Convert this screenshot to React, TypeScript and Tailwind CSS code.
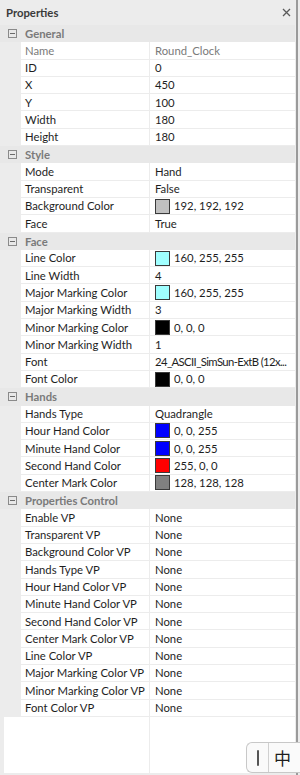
import React from "react";

type Prop = {
  name: string;
  value: string;
  swatch?: string;
  muted?: boolean;
  tight?: boolean;
};

type Category = {
  title: string;
  props: Prop[];
};

const categories: Category[] = [
  {
    title: "General",
    props: [
      { name: "Name", value: "Round_Clock", muted: true },
      { name: "ID", value: "0" },
      { name: "X", value: "450" },
      { name: "Y", value: "100" },
      { name: "Width", value: "180" },
      { name: "Height", value: "180" },
    ],
  },
  {
    title: "Style",
    props: [
      { name: "Mode", value: "Hand" },
      { name: "Transparent", value: "False" },
      { name: "Background Color", value: "192, 192, 192", swatch: "#c0c0c0" },
      { name: "Face", value: "True" },
    ],
  },
  {
    title: "Face",
    props: [
      { name: "Line Color", value: "160, 255, 255", swatch: "#a0ffff" },
      { name: "Line Width", value: "4" },
      { name: "Major Marking Color", value: "160, 255, 255", swatch: "#a0ffff" },
      { name: "Major Marking Width", value: "3" },
      { name: "Minor Marking Color", value: "0, 0, 0", swatch: "#000000" },
      { name: "Minor Marking Width", value: "1" },
      { name: "Font", value: "24_ASCII_SimSun-ExtB (12x...", tight: true },
      { name: "Font Color", value: "0, 0, 0", swatch: "#000000" },
    ],
  },
  {
    title: "Hands",
    props: [
      { name: "Hands Type", value: "Quadrangle" },
      { name: "Hour Hand Color", value: "0, 0, 255", swatch: "#0000ff" },
      { name: "Minute Hand Color", value: "0, 0, 255", swatch: "#0000ff" },
      { name: "Second Hand Color", value: "255, 0, 0", swatch: "#ff0000" },
      { name: "Center Mark Color", value: "128, 128, 128", swatch: "#808080" },
    ],
  },
  {
    title: "Properties Control",
    props: [
      "Enable VP",
      "Transparent VP",
      "Background Color VP",
      "Hands Type VP",
      "Hour Hand Color VP",
      "Minute Hand Color VP",
      "Second Hand Color VP",
      "Center Mark Color VP",
      "Line Color VP",
      "Major Marking Color VP",
      "Minor Marking Color VP",
      "Font Color VP",
    ].map(n => ({ name: n, value: "None" })),
  },
];

function CollapseIcon() {
  return (
    <svg width="9" height="9" viewBox="0 0 9 9" className="shrink-0">
      <rect x="0.5" y="0.5" width="8" height="8" fill="none" stroke="#8a8a8a" />
      <line x1="2" y1="4.5" x2="7" y2="4.5" stroke="#6a6a6a" />
    </svg>
  );
}

function CategoryRow({ title }: { title: string }) {
  return (
    <div className="h-[17.3px] flex items-center bg-[#e8e8e8]">
      <div className="w-[21px] pl-[8px] flex items-center">
        <CollapseIcon />
      </div>
      <span className="pl-[4px] font-bold text-[#7a7a7a]">{title}</span>
    </div>
  );
}

function PropRow({ p }: { p: Prop }) {
  const color = p.muted ? "text-[#7a7a7a]" : "text-[#1e1e1e]";
  return (
    <div className="h-[17.3px] flex bg-[#ececec]">
      <div className="w-[21px] shrink-0" />
      <div className={`w-[128px] shrink-0 bg-white border-b border-[#ececec] pl-[4px] flex items-center whitespace-nowrap overflow-hidden ${color}`}>
        {p.name}
      </div>
      <div className="w-px shrink-0 bg-[#ececec]" />
      <div className={`flex-1 bg-white border-b border-[#ececec] pl-[5px] flex items-center gap-[4px] whitespace-nowrap overflow-hidden ${color}`}>
        {p.swatch && (
          <span
            className="w-[15px] h-[15px] shrink-0 border border-[#3a3a3a]"
            style={{ backgroundColor: p.swatch }}
          />
        )}
        <span className={p.tight ? "tracking-[-0.6px]" : ""}>{p.value}</span>
      </div>
    </div>
  );
}

export default function App() {
  return (
    <div
      className="relative w-[300px] h-[775px] bg-[#ececec] flex text-[11.3px] leading-none overflow-hidden"
      style={{ fontFamily: 'Lato, "Noto Sans", sans-serif' }}
    >
      <div className="w-[295px] flex flex-col">
        <div className="h-[25px] shrink-0 flex items-center justify-between pl-[6px] pr-[3px]">
          <span className="font-bold text-[#3a3a3a]">Properties</span>
          <svg width="9" height="9" viewBox="0 0 9 9" className="mr-[1px]">
            <path d="M1 1 L8 8 M8 1 L1 8" stroke="#5a5a5a" strokeWidth="1.3" />
          </svg>
        </div>
        <div className="flex flex-col">
          {categories.map(c => (
            <React.Fragment key={c.title}>
              <CategoryRow title={c.title} />
              {c.props.map(p => (
                <PropRow key={c.title + p.name} p={p} />
              ))}
            </React.Fragment>
          ))}
        </div>
        <div className="flex-1 flex pl-[4px] pb-[2px]">
          <div className="w-[145px] bg-white" />
          <div className="w-px bg-[#ececec]" />
          <div className="flex-1 bg-white" />
        </div>
      </div>
      <div className="w-px bg-[#ececec]" />
      <div className="w-[2px] bg-[#9a9a9a]" />
      <div className="w-[2px] bg-[#ececec]" />

      <div className="absolute right-0 bottom-[2px] w-[54px] h-[31px] flex items-center bg-[#fafafa] border border-r-0 border-[#c8c8c8] rounded-l-[6px]">
        <div className="w-[21px] flex justify-center">
          <div className="w-[2px] h-[16px] bg-[#555] rounded-full" />
        </div>
        <div className="w-px h-full bg-[#d0d0d0]" />
        <span
          className="pl-[5px] text-[17px] text-[#1e1e1e]"
          style={{ fontFamily: '"Noto Sans CJK SC", sans-serif' }}
        >
          中
        </span>
      </div>
    </div>
  );
}
